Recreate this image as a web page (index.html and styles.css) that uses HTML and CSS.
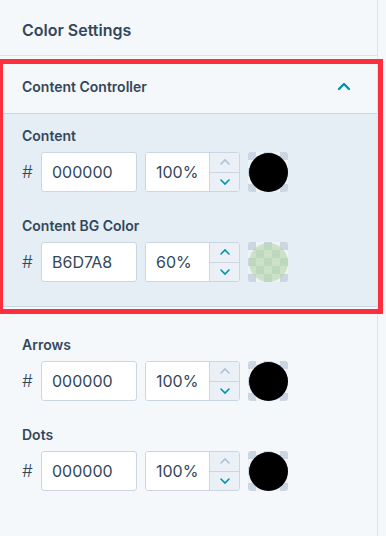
FILE: index.html
```html
<!DOCTYPE html>
<html lang="en">
<head>
    <meta charset="UTF-8">
    <meta name="viewport" content="width=device-width, initial-scale=1.0">
    <title>Color Settings</title>
    <link rel="stylesheet" href="styles.css">
</head>
<body>
    <div id="panel">
        <div class="panel-title">Color Settings</div>

        <div class="group">
            <div class="group-header">
                <span>Content Controller</span>
                <svg class="caret" width="14" height="9" viewBox="0 0 14 9">
                    <path d="M2 7 L7 2 L12 7" fill="none" stroke="#0091ae" stroke-width="2.4" stroke-linecap="round" stroke-linejoin="round"/>
                </svg>
            </div>
            <div class="group-body">
                <div class="field">
                    <div class="field-label">Content</div>
                    <div class="color-row">
                        <span class="hash">#</span>
                        <input class="hex" type="text" value="000000">
                        <div class="alpha">
                            <input type="text" value="100%">
                            <div class="stepper">
                                <span class="step off"><svg width="12" height="8" viewBox="0 0 12 8"><path d="M2 6 L6 2 L10 6" fill="none" stroke-width="1.6" stroke-linecap="round"/></svg></span>
                                <span class="step"><svg width="12" height="8" viewBox="0 0 12 8"><path d="M2 2 L6 6 L10 2" fill="none" stroke-width="1.6" stroke-linecap="round"/></svg></span>
                            </div>
                        </div>
                        <div class="swatch"><span class="dot" style="background: rgba(0, 0, 0, 1);"></span></div>
                    </div>
                </div>

                <div class="field">
                    <div class="field-label">Content BG Color</div>
                    <div class="color-row">
                        <span class="hash">#</span>
                        <input class="hex" type="text" value="B6D7A8">
                        <div class="alpha">
                            <input type="text" value="60%">
                            <div class="stepper">
                                <span class="step"><svg width="12" height="8" viewBox="0 0 12 8"><path d="M2 6 L6 2 L10 6" fill="none" stroke-width="1.6" stroke-linecap="round"/></svg></span>
                                <span class="step"><svg width="12" height="8" viewBox="0 0 12 8"><path d="M2 2 L6 6 L10 2" fill="none" stroke-width="1.6" stroke-linecap="round"/></svg></span>
                            </div>
                        </div>
                        <div class="swatch"><span class="dot" style="background: rgba(182, 215, 168, 0.6);"></span></div>
                    </div>
                </div>
            </div>
            <div class="highlight"></div>
        </div>

        <div class="plain">
            <div class="field">
                <div class="field-label">Arrows</div>
                <div class="color-row">
                    <span class="hash">#</span>
                    <input class="hex" type="text" value="000000">
                    <div class="alpha">
                        <input type="text" value="100%">
                        <div class="stepper">
                            <span class="step off"><svg width="12" height="8" viewBox="0 0 12 8"><path d="M2 6 L6 2 L10 6" fill="none" stroke-width="1.6" stroke-linecap="round"/></svg></span>
                            <span class="step"><svg width="12" height="8" viewBox="0 0 12 8"><path d="M2 2 L6 6 L10 2" fill="none" stroke-width="1.6" stroke-linecap="round"/></svg></span>
                        </div>
                    </div>
                    <div class="swatch"><span class="dot" style="background: rgba(0, 0, 0, 1);"></span></div>
                </div>
            </div>

            <div class="field">
                <div class="field-label">Dots</div>
                <div class="color-row">
                    <span class="hash">#</span>
                    <input class="hex" type="text" value="000000">
                    <div class="alpha">
                        <input type="text" value="100%">
                        <div class="stepper">
                            <span class="step off"><svg width="12" height="8" viewBox="0 0 12 8"><path d="M2 6 L6 2 L10 6" fill="none" stroke-width="1.6" stroke-linecap="round"/></svg></span>
                            <span class="step"><svg width="12" height="8" viewBox="0 0 12 8"><path d="M2 2 L6 6 L10 2" fill="none" stroke-width="1.6" stroke-linecap="round"/></svg></span>
                        </div>
                    </div>
                    <div class="swatch"><span class="dot" style="background: rgba(0, 0, 0, 1);"></span></div>
                </div>
            </div>
        </div>
    </div>
</body>
</html>
```

FILE: styles.css
```css
body {
    margin: 0;
    padding: 0;
    font-family: Inter, "Open Sans", sans-serif;
    color: #33475b;
    background-color: #f5f8fa;
}

#panel {
    width: 377px;
    height: 536px;
    border-right: 1px solid #dfe3eb;
    background-color: #f5f8fa;
}

.panel-title {
    height: 56px;
    box-sizing: border-box;
    padding: 4px 22px 0;
    display: flex;
    align-items: center;
    font-size: 16px;
    font-weight: 600;
    border-bottom: 1px solid #dfe3eb;
}

.group {
    position: relative;
}

.group-header {
    height: 58px;
    box-sizing: border-box;
    padding: 3px 26px 0 22px;
    display: flex;
    align-items: center;
    justify-content: space-between;
    font-size: 14px;
    font-weight: 600;
    border-bottom: 1px solid #cbd6e2;
}

.caret {
    display: block;
}

.group-body {
    background-color: #e5edf5;
    padding: 12px 0 0;
    border-bottom: 1px solid #cbd6e2;
}

.highlight {
    position: absolute;
    left: -2px;
    top: 3px;
    width: 385px;
    height: 255px;
    box-sizing: border-box;
    border: 5px solid #fd2f3f;
    pointer-events: none;
}

.plain {
    padding-top: 28px;
}

.field {
    margin-bottom: 24px;
}

.field-label {
    padding-left: 22px;
    font-size: 14px;
    font-weight: 600;
    line-height: 20px;
    margin-bottom: 6px;
}

.color-row {
    display: flex;
    align-items: center;
    padding-left: 22px;
    height: 40px;
}

.hash {
    width: 19px;
    font-size: 17px;
    font-weight: 300;
}

input[type="text"] {
    font-family: Inter, "Open Sans", sans-serif;
    font-size: 16px;
    color: #33475b;
    border: none;
    outline: none;
    background: #fff;
    margin: 0;
}

.hex {
    width: 96px;
    height: 40px;
    box-sizing: border-box;
    padding: 0 10px;
    border: 1px solid #cbd6e2 !important;
    border-radius: 3px;
}

.alpha {
    display: flex;
    width: 95px;
    height: 40px;
    margin-left: 8px;
    box-sizing: border-box;
    border: 1px solid #cbd6e2;
    border-radius: 3px;
    overflow: hidden;
    background: #fff;
}

.alpha input[type="text"] {
    width: 63px;
    padding: 0 0 0 10px;
    box-sizing: border-box;
}

.stepper {
    width: 31px;
    display: flex;
    flex-direction: column;
    border-left: 1px solid #cbd6e2;
    background: #eaf0f6;
}

.step {
    flex: 1;
    display: flex;
    align-items: center;
    justify-content: center;
    stroke: #0091ae;
}

.step + .step {
    border-top: 1px solid #cbd6e2;
}

.step.off {
    stroke: #b0c1d4;
}

.swatch {
    width: 40px;
    height: 40px;
    margin-left: 8px;
    border-radius: 3px;
    display: flex;
    align-items: center;
    justify-content: center;
    background: repeating-conic-gradient(#eef3f8 0 25%, #cbd6e2 0 50%) 0 0 / 16px 16px;
}

.dot {
    width: 39px;
    height: 39px;
    border-radius: 50%;
}
```
